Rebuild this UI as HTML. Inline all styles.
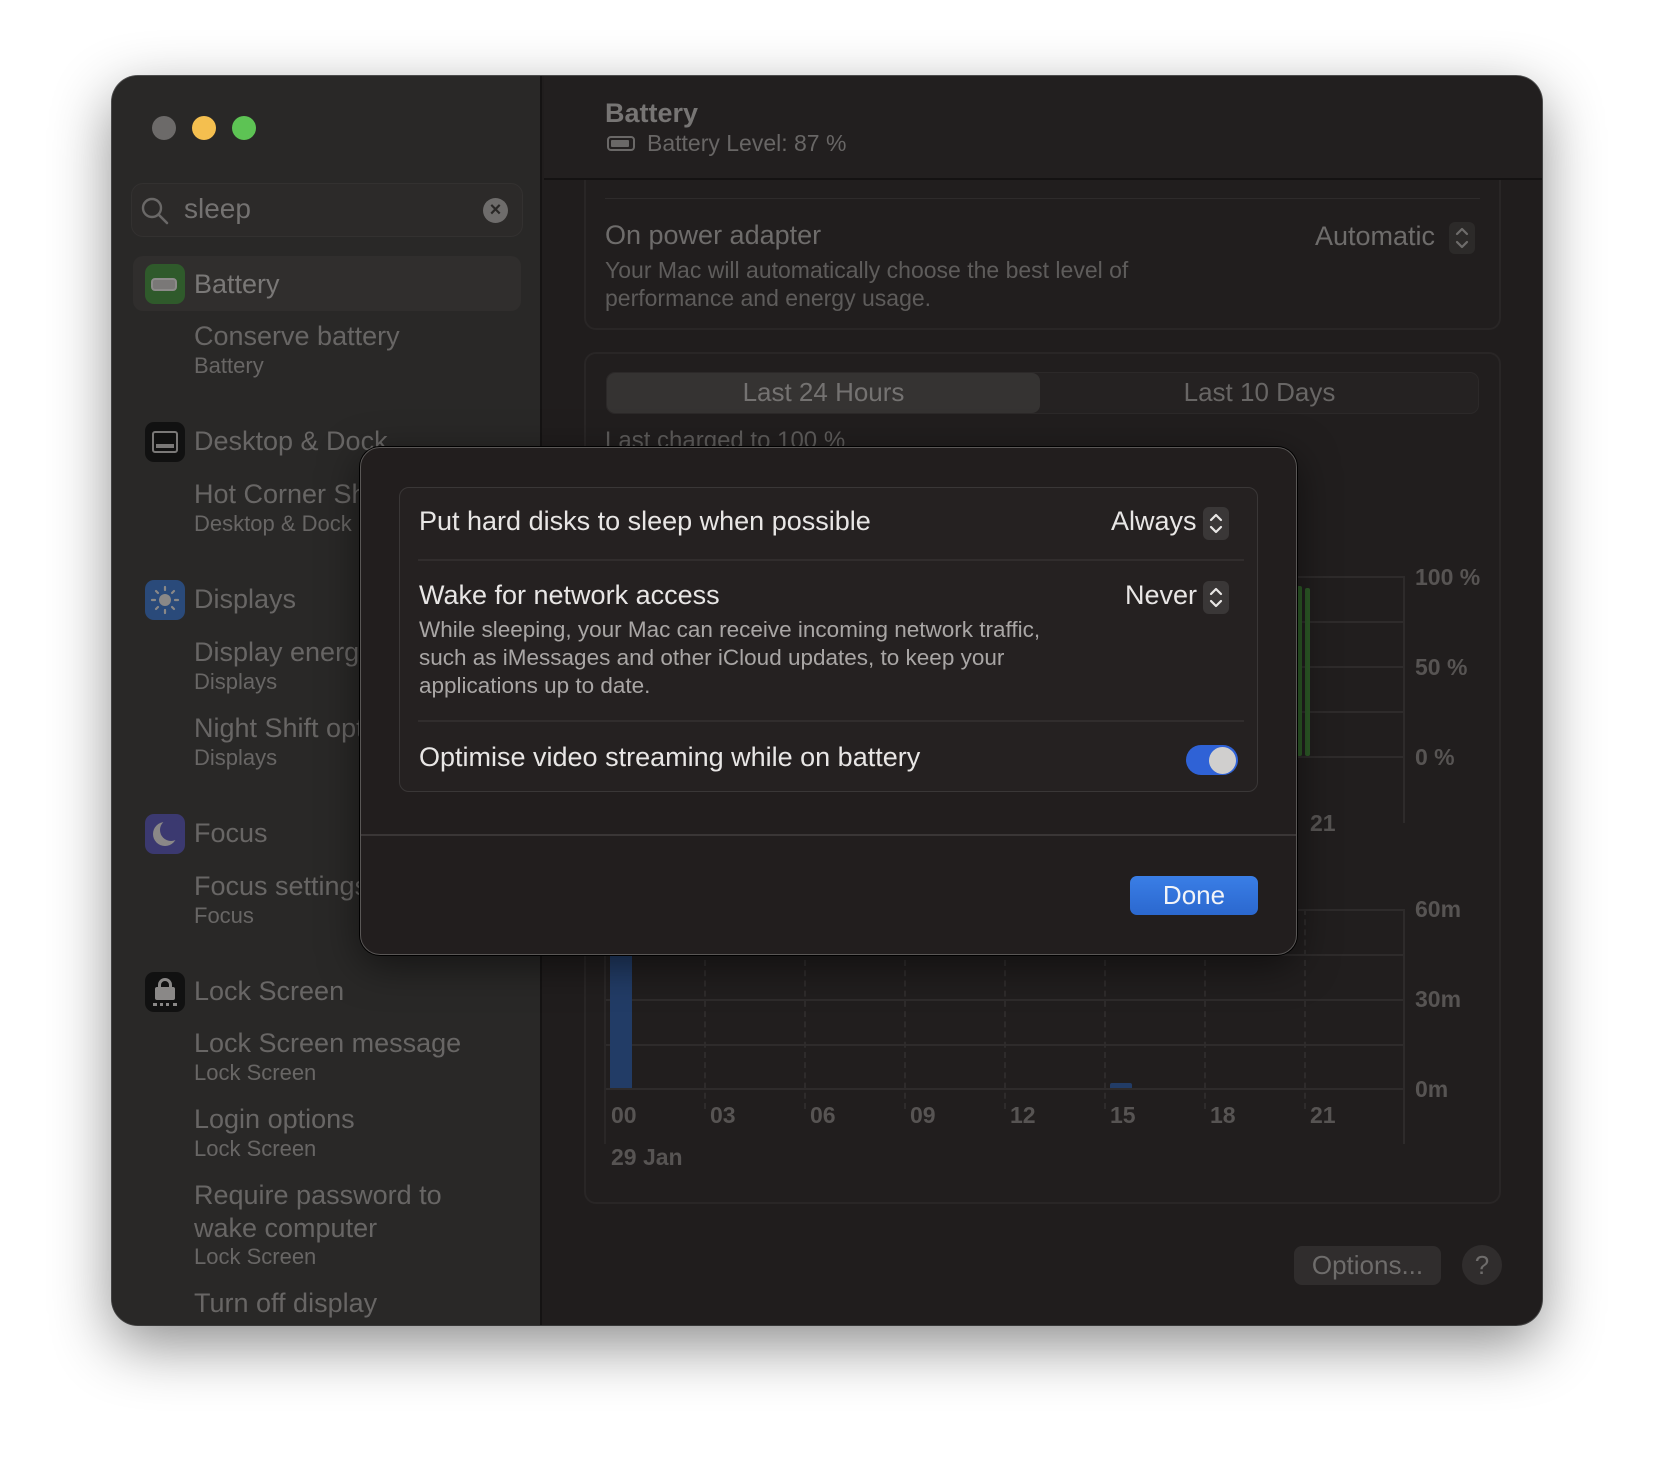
<!DOCTYPE html>
<html><head><meta charset="utf-8"><style>
*{margin:0;padding:0;box-sizing:border-box}
body{width:1654px;height:1474px;background:#fff;position:relative;overflow:hidden;font-family:"Liberation Sans",sans-serif}
.a{position:absolute}
.win{left:112px;top:76px;width:1430px;height:1249px;border-radius:26px;background:#201d1d;overflow:hidden;box-shadow:0 20px 60px rgba(0,0,0,.45),0 0 0 1px #555}
.side{left:0;top:0;width:430px;height:100%;background:#292827;border-right:2px solid #151313}
.t{color:#686665;white-space:nowrap}
.m{font-size:27px}
.s{font-size:22px}
.ic{width:40px;height:40px;border-radius:9px}
.gl{background:#2e2b2b;height:2px}
.xl{color:#575453;font-size:23px;font-weight:bold}
.vd{width:0;border-left:2px dashed #2e2b2b}
</style></head><body>
<div class="a win">
  <div class="a side">
    <div class="a" style="left:40px;top:40px;width:24px;height:24px;border-radius:50%;background:#6c6a69"></div>
    <div class="a" style="left:80px;top:40px;width:24px;height:24px;border-radius:50%;background:#f4bf4f"></div>
    <div class="a" style="left:120px;top:40px;width:24px;height:24px;border-radius:50%;background:#5dc354"></div>
    <div class="a" style="left:19px;top:107px;width:392px;height:54px;border-radius:12px;background:#2c2a29;border:1px solid #333130"></div>
    <svg class="a" style="left:28px;top:120px" width="30" height="30" viewBox="0 0 30 30"><circle cx="12" cy="12" r="9" fill="none" stroke="#6a6867" stroke-width="2.4"/><path d="M19 19l8 8" stroke="#6a6867" stroke-width="2.6" stroke-linecap="round"/></svg>
    <div class="a t" style="left:72px;top:111px;font-size:28px;line-height:44px;color:#747271">sleep</div>
    <div class="a" style="left:371px;top:122px;width:25px;height:25px;border-radius:50%;background:#6e6c6b;color:#2a2827;font-size:20px;line-height:25px;text-align:center;font-weight:bold">×</div>
    <div class="a" style="left:21px;top:180px;width:388px;height:55px;border-radius:10px;background:#302e2d"></div>
    <div class="a ic" style="left:33px;top:188px;background:#2f5a2b"><div class="a" style="left:6px;top:14px;width:26px;height:13px;border-radius:4px;border:2px solid #8c8a89;background:#7a7877"></div></div>
    <div class="a t m" style="left:82px;top:193px;color:#7a7877">Battery</div>
    <div class="a t m" style="left:82px;top:245px">Conserve battery</div>
    <div class="a t s" style="left:82px;top:277px">Battery</div>

    <div class="a ic" style="left:33px;top:346px;background:#111"><div class="a" style="left:7px;top:9px;width:26px;height:22px;border:2px solid #7a7877;border-radius:3px"></div><div class="a" style="left:11px;top:22px;width:18px;height:4px;background:#7a7877"></div></div>
    <div class="a t m" style="left:82px;top:350px">Desktop &amp; Dock</div>
    <div class="a t m" style="left:82px;top:403px">Hot Corner Shortcuts</div>
    <div class="a t s" style="left:82px;top:435px">Desktop &amp; Dock</div>

    <div class="a ic" style="left:33px;top:504px;background:#2a4a7a"><svg width="40" height="40"><circle cx="20" cy="20" r="6" fill="#8a8887"/><g stroke="#8a8887" stroke-width="2.2" stroke-linecap="round"><path d="M20 7v3M20 30v3M7 20h3M30 20h3M11 11l2 2M27 27l2 2M11 29l2-2M27 13l2-2"/></g></svg></div>
    <div class="a t m" style="left:82px;top:508px">Displays</div>
    <div class="a t m" style="left:82px;top:561px">Display energy</div>
    <div class="a t s" style="left:82px;top:593px">Displays</div>
    <div class="a t m" style="left:82px;top:637px">Night Shift options</div>
    <div class="a t s" style="left:82px;top:669px">Displays</div>

    <div class="a ic" style="left:33px;top:738px;background:#3b3970"><div class="a" style="left:8px;top:8px;width:24px;height:24px;border-radius:50%;background:#8a8887"></div><div class="a" style="left:15px;top:5px;width:22px;height:22px;border-radius:50%;background:#3b3970"></div></div>
    <div class="a t m" style="left:82px;top:742px">Focus</div>
    <div class="a t m" style="left:82px;top:795px">Focus settings</div>
    <div class="a t s" style="left:82px;top:827px">Focus</div>

    <div class="a ic" style="left:33px;top:896px;background:#111"><div class="a" style="left:13px;top:6px;width:14px;height:14px;border:3px solid #8a8887;border-radius:7px 7px 0 0"></div><div class="a" style="left:10px;top:15px;width:20px;height:13px;background:#8a8887;border-radius:2px"></div><div class="a" style="left:8px;top:31px;width:24px;height:3px;border-top:3px dotted #8a8887"></div></div>
    <div class="a t m" style="left:82px;top:900px">Lock Screen</div>
    <div class="a t m" style="left:82px;top:952px">Lock Screen message</div>
    <div class="a t s" style="left:82px;top:984px">Lock Screen</div>
    <div class="a t m" style="left:82px;top:1028px">Login options</div>
    <div class="a t s" style="left:82px;top:1060px">Lock Screen</div>
    <div class="a t m" style="left:82px;top:1104px">Require password to</div>
    <div class="a t m" style="left:82px;top:1137px">wake computer</div>
    <div class="a t s" style="left:82px;top:1168px">Lock Screen</div>
    <div class="a t m" style="left:82px;top:1212px">Turn off display</div>
  </div>

  <!-- main -->
  <div class="a" style="left:472px;top:60px;width:917px;height:194px;border:2px solid #292626;border-radius:12px;background:#211e1e"></div>
  <div class="a" style="left:432px;top:0;width:998px;height:104px;background:#221f1f;border-bottom:2px solid #141212"></div>
  <div class="a t" style="left:493px;top:22px;font-size:27px;font-weight:bold;color:#777574">Battery</div>
  <div class="a" style="left:495px;top:60px;width:28px;height:15px;border:2px solid #6a6867;border-radius:4px"><div style="margin:2px;width:18px;height:7px;background:#6a6867;border-radius:1px"></div></div>
  <div class="a t" style="left:535px;top:54px;font-size:23px;color:#686665">Battery Level: 87 %</div>

  <div class="a gl" style="left:493px;top:122px;width:875px;height:1px"></div>
  <div class="a t" style="left:493px;top:144px;font-size:27px;color:#6e6c6b">On power adapter</div>
  <div class="a t" style="left:493px;top:180px;font-size:23px;line-height:28px;color:#5e5c5b">Your Mac will automatically choose the best level of<br>performance and energy usage.</div>
  <div class="a t" style="left:1203px;top:145px;font-size:27px;color:#6e6c6b">Automatic</div>
  <div class="a" style="left:1337px;top:146px;width:26px;height:32px;border-radius:6px;background:#2c2a29"></div>
  <svg class="a" style="left:1337px;top:146px" width="26" height="32"><path d="M8 12l5-5 5 5M8 20l5 5 5-5" fill="none" stroke="#6e6c6b" stroke-width="2.2" stroke-linecap="round" stroke-linejoin="round"/></svg>

  <div class="a" style="left:472px;top:276px;width:917px;height:852px;border:2px solid #292626;border-radius:12px;background:#211e1e"></div>
  <div class="a" style="left:494px;top:296px;width:873px;height:42px;border-radius:9px;background:#252222;border:1px solid #2c2929"></div>
  <div class="a" style="left:495px;top:297px;width:433px;height:40px;border-radius:8px;background:#353332"></div>
  <div class="a t" style="left:495px;top:301px;width:433px;text-align:center;font-size:26px;color:#747271">Last 24 Hours</div>
  <div class="a t" style="left:928px;top:301px;width:439px;text-align:center;font-size:26px;color:#686665">Last 10 Days</div>
  <div class="a t" style="left:493px;top:351px;font-size:24px;color:#5e5c5b">Last charged to 100 %</div>

  <!-- top chart -->
  <div class="a gl" style="left:1180px;top:500px;width:111px"></div>
  <div class="a gl" style="left:1180px;top:545px;width:111px"></div>
  <div class="a gl" style="left:1180px;top:590px;width:111px"></div>
  <div class="a gl" style="left:1180px;top:635px;width:111px"></div>
  <div class="a gl" style="left:1180px;top:680px;width:111px"></div>
  <div class="a" style="left:1291px;top:500px;width:2px;height:247px;background:#2e2b2b"></div>
  <div class="a" style="left:1185px;top:510px;width:5px;height:170px;background:#2d5a27;border-radius:2px"></div>
  <div class="a" style="left:1193px;top:512px;width:5px;height:168px;background:#2d5a27;border-radius:2px"></div>
  <div class="a xl" style="left:1303px;top:488px">100 %</div>
  <div class="a xl" style="left:1303px;top:578px">50 %</div>
  <div class="a xl" style="left:1303px;top:668px">0 %</div>
  <div class="a xl" style="left:1198px;top:734px">21</div>

  <!-- bottom chart -->
  <div class="a gl" style="left:492px;top:833px;width:800px"></div>
  <div class="a gl" style="left:492px;top:878px;width:800px"></div>
  <div class="a gl" style="left:492px;top:923px;width:800px"></div>
  <div class="a gl" style="left:492px;top:968px;width:800px"></div>
  <div class="a gl" style="left:492px;top:1012px;width:800px"></div>
  <div class="a" style="left:492px;top:833px;width:2px;height:235px;background:#2a2727"></div>
  <div class="a" style="left:1291px;top:833px;width:2px;height:235px;background:#2e2b2b"></div>
  <div class="a vd" style="left:592px;top:833px;height:200px"></div>
  <div class="a vd" style="left:692px;top:833px;height:200px"></div>
  <div class="a vd" style="left:792px;top:833px;height:200px"></div>
  <div class="a vd" style="left:892px;top:833px;height:200px"></div>
  <div class="a vd" style="left:992px;top:833px;height:200px"></div>
  <div class="a vd" style="left:1092px;top:833px;height:200px"></div>
  <div class="a vd" style="left:1192px;top:833px;height:200px"></div>
  <div class="a" style="left:498px;top:880px;width:22px;height:132px;background:#223c66"></div>
  <div class="a" style="left:998px;top:1007px;width:22px;height:5px;background:#223c66;border-radius:2px 2px 0 0"></div>
  <div class="a xl" style="left:1303px;top:820px">60m</div>
  <div class="a xl" style="left:1303px;top:910px">30m</div>
  <div class="a xl" style="left:1303px;top:1000px">0m</div>
  <div class="a xl" style="left:499px;top:1026px">00</div>
  <div class="a xl" style="left:598px;top:1026px">03</div>
  <div class="a xl" style="left:698px;top:1026px">06</div>
  <div class="a xl" style="left:798px;top:1026px">09</div>
  <div class="a xl" style="left:898px;top:1026px">12</div>
  <div class="a xl" style="left:998px;top:1026px">15</div>
  <div class="a xl" style="left:1098px;top:1026px">18</div>
  <div class="a xl" style="left:1198px;top:1026px">21</div>
  <div class="a xl" style="left:499px;top:1068px">29 Jan</div>

  <div class="a" style="left:1182px;top:1170px;width:147px;height:39px;border-radius:8px;background:#302d2d"></div>
  <div class="a t" style="left:1182px;top:1174px;width:147px;text-align:center;font-size:26px;color:#6e6c6b">Options...</div>
  <div class="a" style="left:1350px;top:1169px;width:40px;height:40px;border-radius:50%;background:#302d2d;color:#6e6c6b;font-size:26px;text-align:center;line-height:40px">?</div>

  <!-- modal -->
  <div class="a" style="left:248px;top:371px;width:937px;height:508px;border-radius:20px;background:#221e1e;border:1.5px solid #5a5756;box-shadow:0 0 0 1px #000,0 10px 40px rgba(0,0,0,.5)"></div>
  <div class="a" style="left:287px;top:411px;width:859px;height:305px;border-radius:10px;background:#252121;border:1.5px solid #3a3737"></div>
  <div class="a t" style="left:307px;top:430px;font-size:27px;color:#e8e6e5">Put hard disks to sleep when possible</div>
  <div class="a t" style="left:999px;top:430px;font-size:27px;color:#e8e6e5">Always</div>
  <div class="a" style="left:1091px;top:431px;width:26px;height:33px;border-radius:6px;background:#3a3737"></div>
  <svg class="a" style="left:1091px;top:431px" width="26" height="33"><path d="M8 13l5-5 5 5M8 20l5 5 5-5" fill="none" stroke="#e8e6e5" stroke-width="2.2" stroke-linecap="round" stroke-linejoin="round"/></svg>
  <div class="a" style="left:306px;top:483px;width:826px;height:2px;background:#312d2d"></div>
  <div class="a t" style="left:307px;top:504px;font-size:27px;color:#e8e6e5">Wake for network access</div>
  <div class="a t" style="left:307px;top:540px;font-size:22.5px;line-height:28px;color:#a9a6a5">While sleeping, your Mac can receive incoming network traffic,<br>such as iMessages and other iCloud updates, to keep your<br>applications up to date.</div>
  <div class="a t" style="left:1013px;top:504px;font-size:27px;color:#e8e6e5">Never</div>
  <div class="a" style="left:1091px;top:505px;width:26px;height:33px;border-radius:6px;background:#3a3737"></div>
  <svg class="a" style="left:1091px;top:505px" width="26" height="33"><path d="M8 13l5-5 5 5M8 20l5 5 5-5" fill="none" stroke="#e8e6e5" stroke-width="2.2" stroke-linecap="round" stroke-linejoin="round"/></svg>
  <div class="a" style="left:306px;top:644px;width:826px;height:2px;background:#312d2d"></div>
  <div class="a t" style="left:307px;top:666px;font-size:27px;color:#e8e6e5">Optimise video streaming while on battery</div>
  <div class="a" style="left:1074px;top:669px;width:52px;height:30px;border-radius:15px;background:#2f62d6"></div>
  <div class="a" style="left:1097px;top:671px;width:27px;height:27px;border-radius:50%;background:#d0cfce"></div>
  <div class="a" style="left:249px;top:758px;width:935px;height:2px;background:#3a3636"></div>
  <div class="a" style="left:1018px;top:800px;width:128px;height:39px;border-radius:7px;background:linear-gradient(#3a7ee6,#2b68cf)"></div>
  <div class="a t" style="left:1018px;top:804px;width:128px;text-align:center;font-size:26px;color:#f2f4f8">Done</div>
</div>
</body></html>
